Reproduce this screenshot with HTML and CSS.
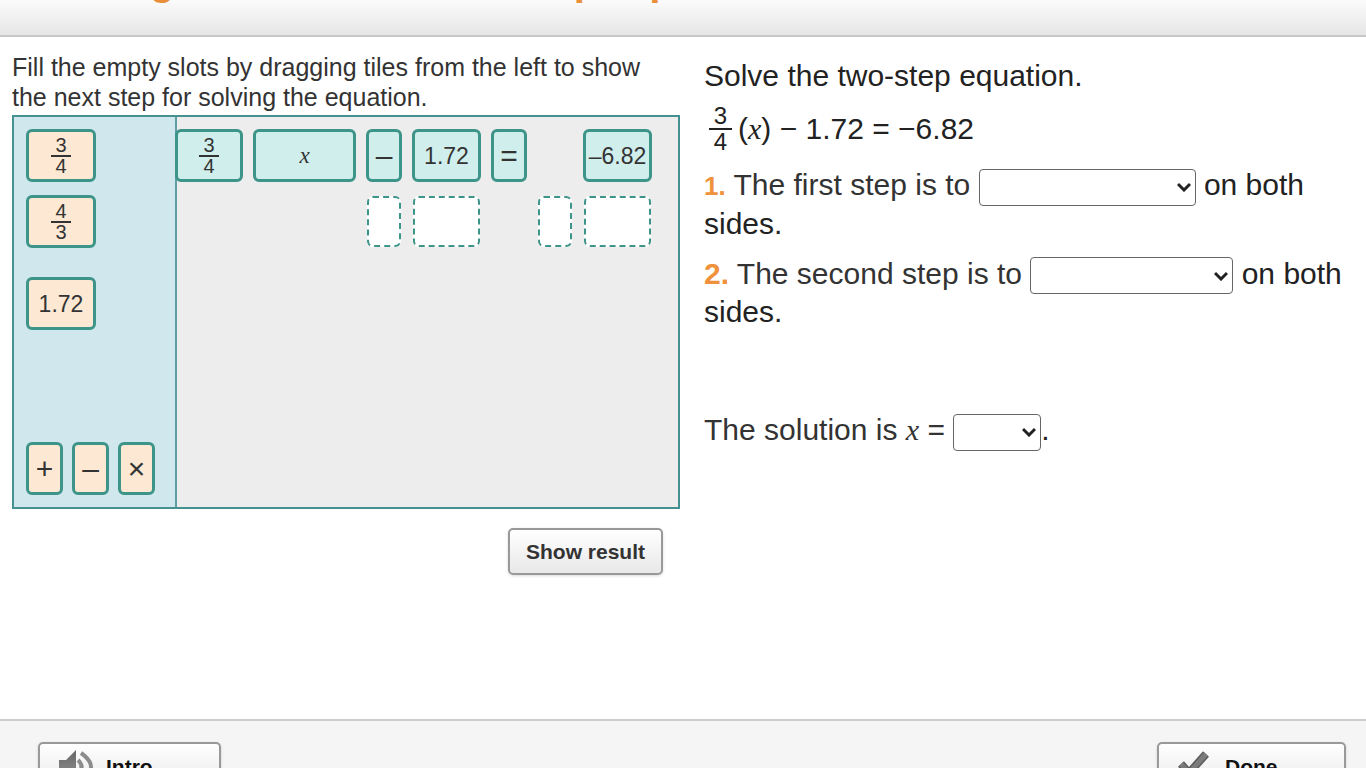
FILE: index.html
```html
<!DOCTYPE html>
<html lang="en">
<head>
<meta charset="utf-8">
<title>Two-Step Equations</title>
<link rel="stylesheet" href="styles.css">
</head>
<body>
<header class="header">
  <h1 class="title">Solving a Fractional Two-Step Equation</h1>
</header>
<main class="main">
  <section class="activity">
    <p class="instructions">Fill the empty slots by dragging tiles from the left to show the next step for solving the equation.</p>
    <div class="board">
      <div class="tray">
        <button class="tile" type="button"><span class="frac"><span class="num">3</span><span>4</span></span></button>
        <button class="tile" type="button"><span class="frac"><span class="num">4</span><span>3</span></span></button>
        <button class="tile tile-number" type="button">1.72</button>
        <div class="operators">
          <button class="tile op" type="button">+</button>
          <button class="tile op" type="button">–</button>
          <button class="tile op" type="button">×</button>
        </div>
      </div>
      <div class="work">
        <div class="tile placed"><span class="frac"><span class="num">3</span><span>4</span></span></div>
        <div class="tile placed"><i class="var">x</i></div>
        <div class="tile placed op">–</div>
        <div class="tile placed">1.72</div>
        <div class="tile placed op">=</div>
        <div class="tile placed last">–6.82</div>
        <div class="slot slot-op"></div>
        <div class="slot"></div>
        <div class="slot slot-eq"></div>
        <div class="slot"></div>
      </div>
    </div>
    <button class="button show" type="button">Show result</button>
  </section>
  <section class="question">
    <p class="prompt">Solve the two-step equation.</p>
    <p class="equation"><span class="frac frac-large"><span class="num">3</span><span>4</span></span><span>(<i class="var">x</i>) − 1.72 = −6.82</span></p>
    <p class="step"><b class="marker marker-first">1.</b> <label class="soft" for="first">The first step is to</label> <select class="select select-first" id="first"><option></option></select> on both sides.</p>
    <p class="step"><b class="marker">2.</b> <label class="soft" for="second">The second step is to</label> <select class="select select-second" id="second"><option></option></select> on both sides.</p>
    <p class="solution"><label class="soft" for="answer">The solution is <i class="var">x</i> =</label> <select class="select select-answer" id="answer"><option></option></select>.</p>
  </section>
</main>
<footer class="footer">
  <button class="button nav intro" type="button">
    <svg class="icon" viewBox="0 0 36 36" aria-hidden="true">
      <defs><linearGradient id="metal" x1="0" y1="0" x2="0" y2="1"><stop offset="0" stop-color="#666"/><stop offset="1" stop-color="#999"/></linearGradient></defs>
      <path d="M1 11h7L18 1v34L8 25H1z" fill="url(#metal)"/>
      <path d="M20 11q7 7 0 14" fill="none" stroke="#8c8c8c" stroke-width="4"/>
      <path d="M23 4q20 14 0 28" fill="none" stroke="#8c8c8c" stroke-width="4"/>
    </svg>
    Intro
  </button>
  <button class="button nav" type="button">
    <svg class="icon" viewBox="0 0 36 36" aria-hidden="true">
      <path d="M4 15l8 9L29 5" fill="none" stroke="#5c5c5c" stroke-width="8" stroke-linejoin="round"/>
      <path d="M4 15l8 9L29 5" fill="none" stroke="#7b7b7b" stroke-width="5"/>
    </svg>
    Done
  </button>
</footer>
</body>
</html>
```
FILE: styles.css
```css
* { box-sizing: border-box; }

body {
  margin: 0;
  height: 100vh;
  display: flex;
  flex-direction: column;
  overflow: hidden;
  background: #fff;
  color: #222;
  font-family: "Liberation Sans", Arial, sans-serif;
}

p, h1 { margin: 0; }
button, select { font-family: inherit; margin: 0; }

.header {
  flex: none;
  height: 37px;
  padding: 0 30px;
  border-bottom: 2px solid #c8c8c8;
  background: linear-gradient(#fbfbfb, #e6e6e6);
  overflow: hidden;
}
.title {
  margin-top: -41px;
  font-size: 40px;
  line-height: 44px;
  color: #e98f3a;
}

.main {
  flex: 1;
  min-height: 0;
  display: grid;
  grid-template-columns: 668fr 650fr;
  column-gap: 24px;
  padding: 0 12px;
}

.activity {
  display: flex;
  flex-direction: column;
  padding-top: 15px;
}
.instructions {
  padding-bottom: 3px;
  font-size: 25px;
  line-height: 30px;
  color: #333;
}

.board {
  display: grid;
  grid-template-columns: 163px 1fr;
  border: 2px solid #459090;
}
.tray {
  display: flex;
  flex-direction: column;
  align-items: flex-start;
  gap: 13px;
  padding: 12px;
  border-right: 2px solid #5f9ea3;
  background: #d0e7ed;
}
.tile {
  display: flex;
  align-items: center;
  justify-content: center;
  width: 70px;
  height: 53px;
  padding: 0;
  border: 3px solid #3d9489;
  border-radius: 6px;
  background: #fce8d3;
  color: #333;
  font-size: 23px;
  line-height: 26px;
}
.tile-number { margin-top: 16px; }
.operators {
  display: flex;
  gap: 9px;
  margin-top: 99px;
}
.op { font-size: 30px; }
.operators .tile { width: 37px; }

.work {
  display: grid;
  grid-template-columns: 68px 103px 36px 69px 36px 36px 69px;
  grid-auto-rows: 53px;
  gap: 13px 10px;
  padding: 12px 0;
  margin-left: -2px;
  background: linear-gradient(to right, transparent 2px, #ededed 2px);
}
.placed {
  width: auto;
  background: #d0eeec;
}
.last { grid-column: 7; }
.slot {
  margin: 1px;
  border: 2px dashed #3d9489;
  border-radius: 6px;
  background: #fff;
}
.slot-op { grid-column: 3; }
.slot-eq { grid-column: 6; }

.frac {
  display: inline-flex;
  flex-direction: column;
  align-items: center;
  width: 20px;
  font-size: 20px;
  line-height: 19px;
}
.num {
  align-self: stretch;
  border-bottom: 2px solid currentColor;
  text-align: center;
}
.var { font-family: "Liberation Serif", "Times New Roman", serif; }

.button {
  border: 2px solid #999;
  border-radius: 5px;
  background: linear-gradient(#fff, #e8e8e8);
  box-shadow: 0 1px 3px rgba(0, 0, 0, 0.15);
  color: #333;
  font-size: 21px;
  font-weight: bold;
}
.show {
  align-self: flex-end;
  width: 155px;
  height: 47px;
  margin: 19px 17px 0 0;
  padding: 0;
}

.question {
  padding-top: 21px;
  font-size: 30px;
  line-height: 36px;
}
.equation {
  display: flex;
  align-items: center;
  gap: 6px;
  height: 50px;
  margin: 10px 0 13px 5px;
}
.frac-large {
  width: 23px;
  font-size: 24px;
  line-height: 24px;
}
.step { margin-bottom: 14px; }
.soft { color: #333; }
.marker { color: #f0923c; }
.marker-first { font-size: 26px; }
.select {
  height: 37px;
  vertical-align: middle;
  border: 1px solid #666;
  border-radius: 4px;
  background: #fff url("data:image/svg+xml,%3Csvg xmlns='http://www.w3.org/2000/svg' viewBox='0 0 14 10'%3E%3Cpath d='M1 2l6 6 6-6' fill='none' stroke='%23222' stroke-width='3'/%3E%3C/svg%3E") no-repeat right 4px center / 14px 10px;
  appearance: none;
}
.select-first { width: 217px; }
.select-second { width: 203px; }
.select-answer { width: 88px; }
.solution { margin-top: 82px; }

.footer {
  flex: none;
  display: flex;
  justify-content: space-between;
  align-items: flex-start;
  height: 49px;
  padding: 21px 20px 0 38px;
  border-top: 2px solid #ccc;
  background: #f5f5f5;
  overflow: hidden;
}
.nav {
  display: flex;
  align-items: center;
  gap: 12px;
  width: 189px;
  height: 50px;
  padding: 0 18px;
  color: #111;
}
.intro { width: 183px; }
.icon {
  width: 36px;
  height: 36px;
}
```
